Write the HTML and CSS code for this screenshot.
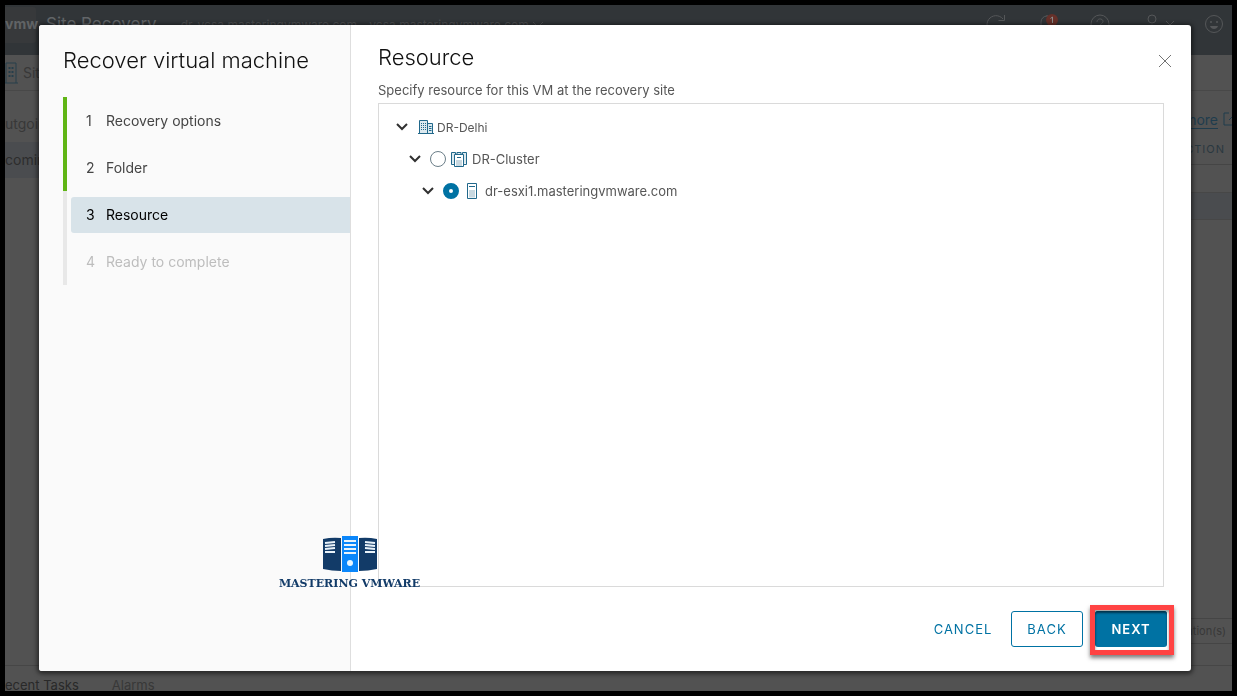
FILE: index.html
```html
<!DOCTYPE html>
<html lang="en">
<head>
<meta charset="utf-8">
<meta name="viewport" content="width=device-width, initial-scale=1">
<title>Recover virtual machine</title>
<link rel="stylesheet" href="styles.css">
</head>
<body>
<div class="app" aria-hidden="true">
  <header class="app-header">
    <span class="brand">vmw</span>
    <span class="product">Site Recovery</span>
    <span class="server">dr-vcsa.masteringvmware.com - vcsa.masteringvmware.com
      <svg width="12" height="8" viewBox="0 0 12 8"><path d="M1 1l5 5 5-5"/></svg>
    </span>
    <span class="tools">
      <svg class="tool" width="20" height="20" viewBox="0 0 20 20"><path d="M17 5A9 9 0 1 0 19 11M18.500 1v5.500h-6"/></svg>
      <svg class="tool" width="20" height="20" viewBox="0 0 20 20"><path d="M3 15V8a6 6 0 0 1 12 0v7zM9 1v1M7 18h4"/><circle class="alert" cx="14" cy="6" r="6"/><path class="alert-count" d="M12.500 4.500L14.500 3v6"/></svg>
      <svg class="tool" width="20" height="20" viewBox="0 0 20 20"><circle cx="10" cy="10" r="9"/><path d="M7 8c0-4 6-4 6-.5 0 2-3 2-3 5M10 14v1"/></svg>
      <svg class="tool user" width="30" height="20" viewBox="0 0 30 20"><circle cx="6" cy="5" r="4"/><path d="M1 18c0-9 10-9 10 0M20 7l4 4 4-4"/></svg>
      <svg class="tool" width="20" height="20" viewBox="0 0 20 20"><circle cx="10" cy="10" r="8.500"/><circle class="solid" cx="7" cy="8" r="1"/><circle class="solid" cx="13" cy="8" r="1"/><path class="solid" d="M6 12h8c-1 4-7 4-8 0z"/></svg>
    </span>
  </header>
  <div class="site-bar">
    <svg width="13" height="22" viewBox="0 0 13 22"><path d="M1 21V1h10v20M0 21h13"/><path d="M4.500 5v12M7.500 5v12" stroke-width="2" stroke-dasharray="2 2"/></svg>
    <span>Site</span>
  </div>
  <div class="workspace">
    <div class="side-nav">
      <div class="side-item">utgoing</div>
      <div class="side-item current">coming</div>
    </div>
    <div class="grid">
      <div class="more"><span class="more-link">more</span>
        <svg width="14" height="14" viewBox="0 0 14 14"><path d="M6 1H1v12h12V8M6 8l7-7M9 1h4v4"/></svg>
      </div>
      <div class="col-head">ACTION</div>
      <div class="grid-row"></div>
      <div class="grid-row picked"></div>
      <div class="grid-foot">replication(s)</div>
    </div>
  </div>
  <div class="task-bar"><span class="task-current">ecent Tasks</span><span>Alarms</span></div>
</div>

<main class="dialog" role="dialog" aria-labelledby="wizard-title">
  <nav class="steps">
    <h1 class="wizard-title" id="wizard-title">Recover virtual machine</h1>
    <ol class="step-list">
      <li class="step done"><button class="step-link" type="button"><span class="num">1</span>Recovery options</button></li>
      <li class="step done"><button class="step-link" type="button"><span class="num">2</span>Folder</button></li>
      <li class="step active"><button class="step-link" type="button" aria-current="step"><span class="num">3</span>Resource</button></li>
      <li class="step"><button class="step-link" type="button" disabled><span class="num">4</span>Ready to complete</button></li>
    </ol>
  </nav>
  <section class="content">
    <div class="content-head">
      <h2 class="page-title">Resource</h2>
      <button class="close" type="button" aria-label="Close"><svg width="14" height="14" viewBox="0 0 14 14"><path d="M1 1l12 12M13 1L1 13"/></svg></button>
    </div>
    <p class="hint">Specify resource for this VM at the recovery site</p>
    <div class="tree">
      <div class="node">
        <button class="caret" type="button" aria-label="Collapse DR-Delhi"><svg width="12" height="8" viewBox="0 0 12 8"><path d="M1 1l5 5 5-5"/></svg></button>
        <svg class="icon" width="16" height="16" viewBox="0 0 16 16"><path class="pale" d="M1.500 1.500h8v13h-8zM9.500 4.500h5v10h-5z"/><path d="M1.500 14.500v-13h8v13M9.500 4.500h5v10M0 14.500h16"/><path d="M3 4.500h5M3 6.500h5M3 8.500h5M3 10.500h5" stroke-dasharray="1 1"/><path d="M11 7.500h2.500M11 9.500h2.500M11 11.500h2.500"/></svg>
        <span class="name small">DR-Delhi</span>
      </div>
      <div class="node level-1">
        <button class="caret" type="button" aria-label="Collapse DR-Cluster"><svg width="12" height="8" viewBox="0 0 12 8"><path d="M1 1l5 5 5-5"/></svg></button>
        <input class="radio" type="radio" name="resource" id="cluster">
        <label class="name" for="cluster"><svg class="icon" width="16" height="16" viewBox="0 0 16 16"><path class="pale" d="M.5 1.500h15v11H.5z"/><path d="M3.500 13.500h-3v-12h4v2M12.500 13.500h3v-12h-4v2M6 3.500v-2h4v2"/><path class="white" d="M3.500 3.500h9v12h-9z"/><path d="M3.500 15.500v-12h9v12zM6 6.500h4"/><path class="shade" d="M5 9h6v6H5z"/></svg>DR-Cluster</label>
      </div>
      <div class="node level-2">
        <button class="caret" type="button" aria-label="Collapse dr-esxi1.masteringvmware.com"><svg width="12" height="8" viewBox="0 0 12 8"><path d="M1 1l5 5 5-5"/></svg></button>
        <input class="radio" type="radio" name="resource" id="host" checked>
        <label class="name" for="host"><svg class="icon host" width="10" height="16" viewBox="0 0 10 16"><path d="M.5.5h9v15h-9zM2 3.500h6"/><path class="shade" d="M2 7h6v7.500H2z"/></svg>dr-esxi1.masteringvmware.com</label>
      </div>
    </div>
    <div class="actions">
      <button class="btn link" type="button">CANCEL</button>
      <button class="btn outline" type="button">BACK</button>
      <span class="next-wrap"><button class="btn primary" type="button">NEXT</button><span class="highlight"></span></span>
    </div>
  </section>
</main>

<div class="watermark">
  <svg width="56" height="38" viewBox="0 0 56 38"><path class="navy" d="M1 4q9-2 18-1v33q-9 0-18-2zM37 3q9-1 18 1v30q-9 2-18 2z"/><path class="azure" d="M20 1h16v36H20z"/><path class="slots" d="M3 8l10-1M3 11l10-1M3 14l10-1M3 17h10M43 7l10 1M43 10l10 1M43 13l10 1M43 17h10M22 6h12M22 10h12M22 14h12M22 18h12"/><circle class="lamp" cx="28" cy="28" r="3"/></svg>
  <span>MASTERING VMWARE</span>
</div>
</body>
</html>
```
FILE: styles.css
```css
* { box-sizing: border-box; }
html, body { height: 100%; }
body {
  margin: 0;
  border: 5px solid #000;
  overflow: hidden;
  background: #525252;
  color: #565656;
  font-family: Inter, "Open Sans", sans-serif;
  font-size: 13px;
}
button { font: inherit; color: inherit; background: none; border: 0; padding: 0; cursor: pointer; }
svg { fill: none; stroke: currentColor; flex: none; }

/* Dimmed application behind the dialog */
.app { display: flex; flex-direction: column; height: 100%; overflow: hidden; color: #383838; white-space: nowrap; }
.app-header { display: flex; height: 50px; padding-bottom: 12px; align-items: center; background: #313538; color: #555759; }
.brand { width: 31px; height: 36px; line-height: 34px; margin-top: 2px; border-radius: 0 3px 3px 0; background: #37393b; color: #606365; font-size: 14px; font-weight: 700; }
.product { margin-left: 10px; font-size: 17px; color: #626568; }
.server { margin-left: 24px; font-size: 12px; color: #4c4e50; }
.tools { display: flex; flex: 1; justify-content: flex-end; gap: 32px; padding-right: 8px; }
.user { margin-left: 4px; margin-right: -4px; }
.alert { fill: #663029; stroke: none; }
.alert-count { stroke: #8a8a8a; }
.solid { fill: currentColor; stroke: none; }
.site-bar { display: flex; align-items: center; gap: 5px; height: 36px; border-bottom: 1px solid #484848; font-size: 14px; }
.site-bar svg { color: #263e4b; }
.workspace { display: flex; flex: 1; justify-content: space-between; }
.side-nav { width: 200px; padding-top: 15px; font-size: 14px; }
.side-item { height: 36px; line-height: 36px; }
.current { background: #4a4c4f; color: #2d2d2d; }
.grid { display: flex; flex-direction: column; width: 200px; padding-top: 16px; text-align: right; }
.more { display: flex; justify-content: flex-end; align-items: center; gap: 5px; height: 24px; margin-right: -5px; font-size: 14px; color: #1f3c4d; }
.more-link { text-decoration: underline; text-underline-offset: 3px; }
.col-head { height: 34px; line-height: 36px; padding-right: 7px; border-bottom: 1px solid #454545; font-size: 11px; letter-spacing: 1px; color: #2a3840; }
.grid-row { height: 27px; }
.picked { height: 28px; background: #4a4c4f; border-top: 1px solid #474747; border-bottom: 1px solid #474747; }
.grid-foot { height: 26px; line-height: 24px; margin-top: auto; margin-bottom: 21px; padding-right: 6px; border-top: 1px solid #454545; border-bottom: 1px solid #454545; font-size: 11px; }
.task-bar { display: flex; gap: 33px; height: 26px; line-height: 39px; border-top: 1px solid #464646; font-size: 13px; }
.task-current { color: #292929; }

/* Wizard dialog */
.dialog {
  position: fixed;
  inset: 25px 46px 25px 39px;
  display: flex;
  overflow: hidden;
  border-radius: 3px;
  background: #fff;
  box-shadow: 0 1px 4px 2px #00000080;
}
.steps { flex: none; width: 312px; padding: 20px 0 0 24px; background: #fafafa; border-right: 1px solid #dedede; }
.wizard-title { margin: 0; font-size: 22px; line-height: 30px; font-weight: 300; color: #111; }
.step-list { margin: 22px 0 0; padding: 0; list-style: none; }
.step { padding: 6px 0 5px 4px; border-left: 4px solid #e8e8e8; }
.done { border-color: #60b515; }
.step-link { display: flex; align-items: center; width: 100%; height: 36px; padding: 0 0 2px 15px; border-radius: 3px 0 0 3px; font-size: 14px; color: #454545; text-align: left; }
.num { width: 20px; }
.active .step-link { background: #d8e3e9; color: #000; }
.step-link:disabled { color: #bdbdbd; }
.content { display: flex; flex: 1; flex-direction: column; min-width: 0; padding: 17px 27px 24px; }
.content-head { display: flex; justify-content: space-between; height: 40px; }
.page-title { margin: 0; font-size: 22px; line-height: 30px; font-weight: 300; color: #111; }
.close { width: 14px; height: 38px; margin-right: -8px; color: #737373; }
.close svg { display: block; margin: auto; }
.hint { margin: 0; height: 21px; line-height: 17px; font-size: 13px; }
.tree { flex: 1; padding: 7px 17px; border: 1px solid #dadada; }
.node { display: flex; align-items: center; height: 32px; }
.level-1 { padding-left: 13px; }
.level-2 { padding-left: 26px; }
.caret { display: flex; width: 12px; color: #313131; }
.caret svg { stroke-width: 2; }
.icon { margin-left: 10px; color: #21688b; }
.node .radio { appearance: none; width: 16px; height: 16px; margin: 0 0 0 9px; border: 1px solid #6b7e88; border-radius: 50%; background: #fff; }
.node .radio:checked { border: 6px solid #0072a3; }
.name { display: flex; align-items: center; font-size: 13px; }
.name .icon { margin: 0 5px; }
.name .host { margin: 0 8px; }
.small { margin-left: 3px; font-size: 12px; }
.pale { fill: #dce9ef; stroke: none; }
.white { fill: #fff; stroke: none; }
.shade { fill: #c8d8e0; stroke: none; }
.actions { display: flex; justify-content: flex-end; gap: 12px; margin: 24px -3px 0 0; }
.btn { height: 36px; min-width: 72px; border-radius: 3px; font-size: 13px; letter-spacing: 1px; color: #0072a3; }
.outline { border: 1px solid #0072a3; }
.primary { background: #0072a3; color: #fff; font-weight: 600; box-shadow: inset 0 2px 2px #00476b; }
.next-wrap { position: relative; }
.highlight { position: absolute; inset: -6px -7px -8px -5px; border: 5px solid #ff4343; box-shadow: 0 3px 4px #00000080, inset 0 2px 3px #00000066; pointer-events: none; }

/* Logo laid over the dialog */
.watermark { position: fixed; left: 278px; top: 535px; display: flex; flex-direction: column; align-items: center; gap: 5px; width: 143px; color: #123b68; font-family: "DejaVu Serif", serif; font-size: 11px; line-height: 12px; font-weight: 700; white-space: nowrap; }
.navy { fill: #123b68; stroke: none; }
.azure { fill: #0a86fa; stroke: none; }
.slots { stroke: #e8f2fa; stroke-width: 2; }
.lamp { fill: #e8f6ff; stroke: none; }
```
